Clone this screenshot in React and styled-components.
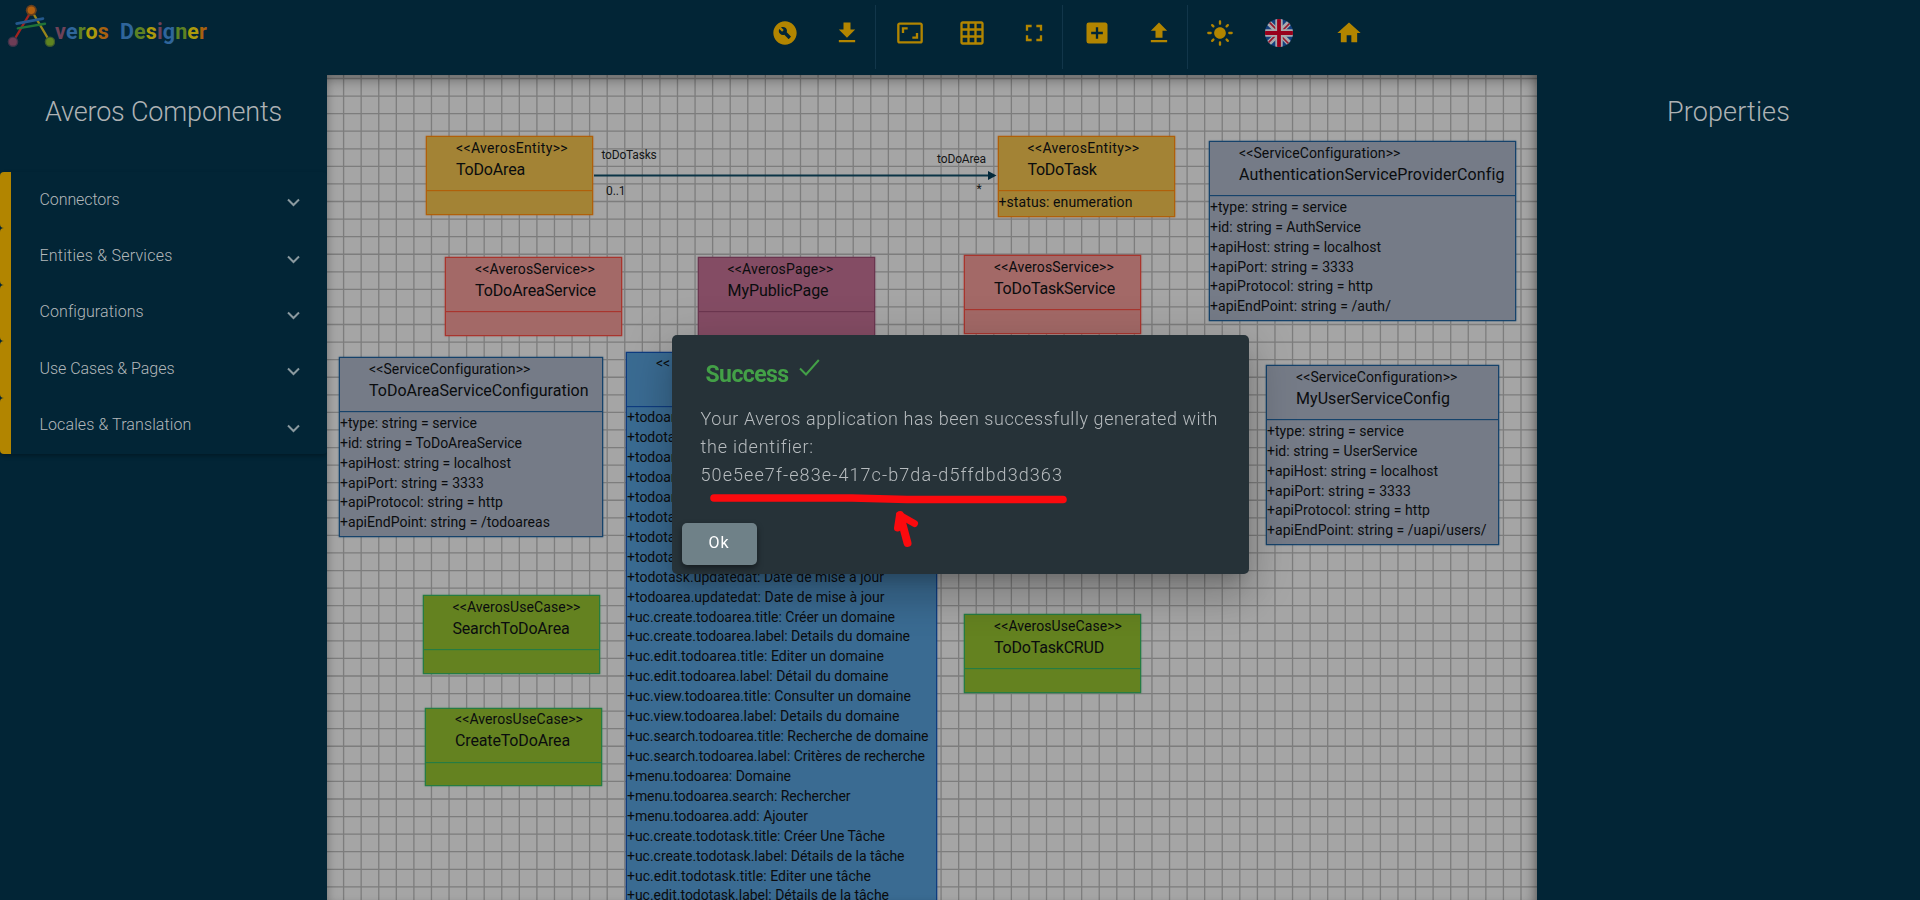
import {useLayoutEffect, useRef, useState} from 'react'
import styled, {createGlobalStyle} from 'styled-components'
import {
  MdAddBox,
  MdAspectRatio,
  MdBuildCircle,
  MdFileUpload,
  MdFullscreen,
  MdGetApp,
  MdGridOn,
  MdHome,
  MdLightMode,
} from 'react-icons/md'

const GlobalStyle = createGlobalStyle`
  * {
    box-sizing: border-box;
  }
  body {
    margin: 0;
    overflow: hidden;
    background-color: #022536;
    font-family: Roboto, 'Open Sans', sans-serif;
  }
`

const Page = styled.div`
  display: flex;
  flex-direction: column;
  height: 900px;
  width: 1920px;
  overflow: hidden;
`

const Header = styled.header`
  display: flex;
  height: 75px;
  flex-shrink: 0;
`

const Brand = styled.div`
  display: flex;
  width: 760px;
`

const LogoMark = styled.svg`
  width: 55px;
  height: 60px;
  flex-shrink: 0;
`

const BrandName = styled.div`
  display: flex;
  padding-top: 19px;
  font-size: 21.5px;
  line-height: 25px;
  font-weight: 700;
`

const BrandWord = styled.span`
  margin-right: 11px;
  white-space: nowrap;
`

const Letter = styled.span`
  color: ${props => props.$color};
`

const ToolGroup = styled.div`
  display: flex;
  align-items: center;
  height: 64px;
  margin-top: 5px;
  padding: 0 4px 8px ${props => props.$left}px;
  gap: ${props => props.$gap || 14.3}px;
  border-right: ${props => (props.$last ? 'none' : '1px solid #12364a')};
`

const ToolButton = styled.button`
  display: flex;
  align-items: center;
  justify-content: center;
  width: 48px;
  height: 48px;
  padding: 0;
  border: none;
  background: none;
  color: #b28500;
  font-size: 28px;
  margin-left: ${props => props.$shift || 0}px;
`

const Body = styled.div`
  display: flex;
  flex: 1;
  min-height: 0;
`

const SidePanel = styled.aside`
  width: ${props => props.$width}px;
  flex-shrink: 0;
`

const PanelTitle = styled.h1`
  display: flex;
  justify-content: center;
  margin: 0;
  height: 97px;
  padding-top: 20px;
  font-size: 27px;
  line-height: 34px;
  font-weight: 300;
  color: #aeb2b4;
`

const Menu = styled.div`
  box-shadow: 0 2px 4px rgba(0, 0, 0, 0.3);
  border-radius: 4px;
`

const MenuItem = styled.div`
  display: flex;
  align-items: center;
  justify-content: space-between;
  height: 56.4px;
  padding: 0 27px 2px 28.5px;
  border-left: 11px solid #b28500;
  border-radius: 4px;
  font-size: 16px;
  font-weight: 300;
  color: #b3b8ba;
`

const Chevron = styled.svg`
  width: 13px;
  height: 9px;
  margin-top: 7px;
`

const Canvas = styled.main`
  position: relative;
  width: 1210px;
  overflow: hidden;
  background-color: #a5a5a5;
`

const Layer = styled.svg`
  position: absolute;
  top: 0;
  left: 0;
  width: 1210px;
  height: 825px;
`

const CanvasShade = styled.div`
  position: absolute;
  inset: 0;
  box-shadow: inset 0 8px 14px -4px rgba(0, 0, 0, 0.4),
    inset -10px 0 14px -10px rgba(0, 0, 0, 0.4),
    inset 6px 0 10px -8px rgba(0, 0, 0, 0.2);
`

const Node = styled.section`
  position: absolute;
  left: ${props => props.$x}px;
  top: ${props => props.$y}px;
  width: ${props => props.$w}px;
  min-height: 78.5px;
  border: 1px solid ${props => props.$line};
  background-color: ${props => props.$fill};
  box-shadow: 0 0 1px 0.3px ${props => props.$line};
  color: #0a0c0e;
  padding-bottom: 4px;
`

const NodeHead = styled.div`
  height: 54px;
  padding: 0.5px 0 0 29px;
  border-bottom: 1px solid ${props => props.$line};
  box-shadow: 0 0 1px ${props => props.$line};
`

const Stereotype = styled.div`
  font-size: 14px;
  line-height: 21px;
`

const NodeName = styled.div`
  font-size: 16px;
  line-height: 22px;
`

const Members = styled.div`
  padding-top: 0.8px;
`

const Member = styled.div`
  height: 19.93px;
  font-size: 14px;
  line-height: 20px;
`

const EdgeLabel = styled.div`
  position: absolute;
  left: ${props => props.$x}px;
  top: ${props => props.$y}px;
  font-size: 12px;
  line-height: 14px;
  color: #141617;
`

const FitSpan = styled.span`
  display: inline-block;
  white-space: pre;
`

const Overlay = styled.div`
  position: fixed;
  inset: 0;
  display: flex;
  align-items: center;
  justify-content: center;
  padding: 9px 0 0 1px;
`

const Dialog = styled.div`
  position: relative;
  display: flex;
  flex-direction: column;
  width: 577px;
  height: 239px;
  border-radius: 5px;
  background-color: #263238;
  box-shadow: 0 11px 15px -7px rgba(0, 0, 0, 0.2),
    0 24px 38px 3px rgba(0, 0, 0, 0.14), 0 9px 46px 8px rgba(0, 0, 0, 0.12);
`

const DialogTitle = styled.h2`
  display: flex;
  align-items: flex-start;
  gap: 10px;
  height: 70px;
  margin: 0;
  padding: 24px 0 0 33.5px;
  font-size: 23px;
  line-height: 32px;
  font-weight: 700;
  color: #43a047;
`

const CheckMark = styled.svg`
  width: 21px;
  height: 17px;
`

const DialogText = styled.p`
  margin: 0;
  padding-left: 28.5px;
  font-size: 18px;
  line-height: 28px;
  font-weight: 300;
  color: #b6bbbe;
`

const OkButton = styled.button`
  width: 75px;
  height: 42px;
  margin: 34px 0 0 10px;
  padding: 0 1px 3px 0;
  border: none;
  border-radius: 5px;
  background-color: #6f8188;
  color: #fff;
  font-family: inherit;
  font-size: 16px;
  letter-spacing: 1px;
  box-shadow: 0 3px 6px rgba(0, 0, 0, 0.45);
`

const Marker = styled.svg`
  position: absolute;
  left: 0;
  top: 0;
  width: 577px;
  height: 239px;
  pointer-events: none;
`

// spreads the letters so that the text takes the given width
const Fit = ({width, children}) => {
  const ref = useRef(null)
  const [spacing, setSpacing] = useState(0)

  useLayoutEffect(() => {
    if (!width) return
    const natural = ref.current.getBoundingClientRect().width
    setSpacing((width - natural) / ref.current.textContent.length)
  }, [width])

  return (
    <FitSpan ref={ref} style={{letterSpacing: `${spacing}px`}}>
      {children}
    </FitSpan>
  )
}

const kinds = {
  entity: {stereotype: 'AverosEntity', w: 112, fill: '#a38335', line: '#b0600a'},
  service: {
    stereotype: 'AverosService',
    w: 120,
    fill: '#a36967',
    line: '#a9352e',
  },
  page: {stereotype: 'AverosPage', w: 106, fill: '#844c64', line: '#6c3650'},
  config: {
    stereotype: 'ServiceConfiguration',
    w: 161,
    fill: '#757b87',
    line: '#16436b',
  },
  locale: {
    stereotype: '',
    fill: '#3a6b92',
    line: '#0e3c80',
  },
  useCase: {
    stereotype: 'AverosUseCase',
    w: 128,
    fill: '#648220',
    line: '#267c43',
  },
}

const nodes = [
  {kind: 'entity', x: 426, y: 136, w: 167, name: ['ToDoArea', 69]},
  {
    kind: 'entity',
    x: 997.5,
    y: 136,
    w: 177,
    name: ['ToDoTask', 69],
    members: [['+status: enumeration', 134]],
  },
  {kind: 'service', x: 445, y: 257, w: 177, name: ['ToDoAreaService', 121]},
  {kind: 'page', x: 697.5, y: 257, w: 177, name: ['MyPublicPage', 101]},
  {kind: 'service', x: 964, y: 255, w: 177, name: ['ToDoTaskService', 121]},
  {
    kind: 'config',
    x: 1209,
    y: 141,
    w: 307,
    name: ['AuthenticationServiceProviderConfig', 265],
    members: [
      ['+type: string = service', 137],
      ['+id: string = AuthService', 151],
      ['+apiHost: string = localhost', 171],
      ['+apiPort: string = 3333', 144],
      ['+apiProtocol: string = http', 163],
      ['+apiEndPoint: string = /auth/', 181],
    ],
  },
  {
    kind: 'config',
    x: 339,
    y: 357,
    w: 264,
    name: ['ToDoAreaServiceConfiguration', 219],
    members: [
      ['+type: string = service', 137],
      ['+id: string = ToDoAreaService', 182],
      ['+apiHost: string = localhost', 171],
      ['+apiPort: string = 3333', 144],
      ['+apiProtocol: string = http', 163],
      ['+apiEndPoint: string = /todoareas', 210],
    ],
  },
  {
    kind: 'config',
    x: 1266,
    y: 365,
    w: 233,
    name: ['MyUserServiceConfig', 153.5],
    members: [
      ['+type: string = service', 137],
      ['+id: string = UserService', 150.5],
      ['+apiHost: string = localhost', 171],
      ['+apiPort: string = 3333', 144],
      ['+apiProtocol: string = http', 163],
      ['+apiEndPoint: string = /uapi/users/', 219.5],
    ],
  },
  {
    kind: 'locale',
    x: 626,
    y: 351.5,
    w: 311,
    name: [''],
    members: [
      ['+todoarea'],
      ['+todotask'],
      ['+todoarea'],
      ['+todoarea'],
      ['+todoarea'],
      ['+todotask'],
      ['+todotask'],
      ['+todotask'],
      ['+todotask.updatedat: Date de mise à jour', 257],
      ['+todoarea.updatedat: Date de mise à jour', 257.5],
      ['+uc.create.todoarea.title: Créer un domaine', 268],
      ['+uc.create.todoarea.label: Details du domaine', 283],
      ['+uc.edit.todoarea.title: Editer un domaine', 257],
      ['+uc.edit.todoarea.label: Détail du domaine', 261.5],
      ['+uc.view.todoarea.title: Consulter un domaine', 284],
      ['+uc.view.todoarea.label: Details du domaine', 272.5],
      ['+uc.search.todoarea.title: Recherche de domaine', 301.5],
      ['+uc.search.todoarea.label: Critères de recherche', 298],
      ['+menu.todoarea: Domaine', 164],
      ['+menu.todoarea.search: Rechercher', 223.5],
      ['+menu.todoarea.add: Ajouter', 181],
      ['+uc.create.todotask.title: Créer Une Tâche', 258],
      ['+uc.create.todotask.label: Détails de la tâche', 277.5],
      ['+uc.edit.todotask.title: Editer une tâche', 244],
      ['+uc.edit.todotask.label: Détails de la tâche', 262],
    ],
  },
  {kind: 'useCase', x: 422.5, y: 595, w: 177, name: ['SearchToDoArea', 117]},
  {kind: 'useCase', x: 425, y: 707.5, w: 177, name: ['CreateToDoArea', 115]},
  {kind: 'useCase', x: 964, y: 614, w: 177, name: ['ToDoTaskCRUD', 110]},
]

const menuItems = [
  ['Connectors', 80],
  ['Entities & Services', 133],
  ['Configurations', 104],
  ['Use Cases & Pages', 135],
  ['Locales & Translation', 152],
]

const plum = '#6e4259'
const blue = '#2f659b'
const green = '#5d8124'
const yellow = '#ac9a0c'
const orange = '#a8610f'

const brandWords = [
  {text: 'veros', width: 54, colors: [plum, blue, green, yellow, orange]},
  {
    text: 'Designer',
    width: 87,
    colors: [blue, green, yellow, plum, blue, green, yellow, orange],
  },
]

// canvas origin inside the window
const originX = 327
const originY = 75
const gridStep = 17.573
const columns = Array.from({length: 69}, (_, i) => 16.6 + i * gridStep)
const rows = Array.from({length: 47}, (_, i) => 3.5 + i * gridStep)

const Logo = () => (
  <LogoMark viewBox="0 0 55 60">
    <g strokeLinecap="round" fill="none">
      <path d="M31.3 11 13.5 41" stroke="#a0231f" strokeWidth="2.4" />
      <path d="M31.8 11 49.5 41" stroke="#98851a" strokeWidth="2.4" />
      <path d="M16.6 23.6 43 18.6" stroke="#24588c" strokeWidth="2.6" />
      <path d="M17.8 28.4 45 23.8" stroke="#207238" strokeWidth="2.4" />
    </g>
    <circle cx="31.3" cy="10.3" r="5.5" fill="#673f1d" />
    <circle cx="31.3" cy="10.3" r="3.7" fill="#b2600f" />
    <circle cx="13" cy="41.7" r="5.3" fill="#3c344a" />
    <circle cx="13" cy="41.7" r="3.9" fill="#6e3d56" />
    <circle cx="50" cy="41.7" r="5.3" fill="#3c5a2c" />
    <circle cx="50" cy="41.7" r="3.9" fill="#5f8420" />
  </LogoMark>
)

const Flag = () => (
  <svg width="28" height="28" viewBox="0 0 28 28">
    <clipPath id="disc">
      <circle cx="14" cy="14" r="14" />
    </clipPath>
    <g clipPath="url(#disc)">
      <rect width="28" height="28" fill="#123f7e" />
      <path d="M2 2 26 26M26 2 2 26" stroke="#a8a8ac" strokeWidth="5.4" />
      <path d="M3 2 14 13M14 15 25 26" stroke="#98152a" strokeWidth="1.6" />
      <path d="M26 3 15 14M13 14 2 25" stroke="#98152a" strokeWidth="1.6" />
      <path d="M14 0V28M0 14H28" stroke="#a8a8ac" strokeWidth="7.4" />
      <path d="M14 0V28M0 14H28" stroke="#98001b" strokeWidth="3.8" />
    </g>
  </svg>
)

const ClassNode = ({node}) => {
  const kind = kinds[node.kind]
  return (
    <Node
      $x={node.x - originX}
      $y={node.y - originY}
      $w={node.w}
      $fill={kind.fill}
      $line={kind.line}
    >
      <NodeHead $line={kind.line}>
        <Stereotype>
          {kind.stereotype ? (
            <Fit width={kind.w}>{`<<${kind.stereotype}>>`}</Fit>
          ) : (
            '<<'
          )}
        </Stereotype>
        <NodeName>
          <Fit width={node.name[1]}>{node.name[0]}</Fit>
        </NodeName>
      </NodeHead>
      <Members>
        {(node.members || []).map(([text, width], i) => (
          <Member key={`${text}${i}`}>
            <Fit width={width}>{text}</Fit>
          </Member>
        ))}
      </Members>
    </Node>
  )
}

const Toolbar = () => (
  <>
    <ToolGroup $left={0.5}>
      <ToolButton>
        <MdBuildCircle />
      </ToolButton>
      <ToolButton>
        <MdGetApp />
      </ToolButton>
    </ToolGroup>
    <ToolGroup $left={10}>
      <ToolButton>
        <MdAspectRatio />
      </ToolButton>
      <ToolButton>
        <MdGridOn />
      </ToolButton>
      <ToolButton>
        <MdFullscreen />
      </ToolButton>
    </ToolGroup>
    <ToolGroup $left={9.5}>
      <ToolButton>
        <MdAddBox />
      </ToolButton>
      <ToolButton>
        <MdFileUpload />
      </ToolButton>
    </ToolGroup>
    <ToolGroup $left={8} $gap={11} $last>
      <ToolButton>
        <MdLightMode />
      </ToolButton>
      <ToolButton>
        <Flag />
      </ToolButton>
      <ToolButton $shift={10.7}>
        <MdHome />
      </ToolButton>
    </ToolGroup>
  </>
)

const Diagram = () => (
  <Canvas>
    <Layer>
      {columns.map(x => (
        <path key={x} d={`M${x} 0V825`} stroke="#7d7d7d" strokeWidth="1.3" />
      ))}
      {rows.map(y => (
        <path key={y} d={`M0 ${y}H1210`} stroke="#7d7d7d" strokeWidth="1.3" />
      ))}
    </Layer>
    {nodes.map(node => (
      <ClassNode key={`${node.kind}${node.name[0]}`} node={node} />
    ))}
    <Layer>
      <path d="M267 100.5H664" stroke="#0b3446" strokeWidth="2" />
      <path d="M661 96 669.5 100.5 661 105Z" fill="#04293b" />
    </Layer>
    <EdgeLabel $x={274.5} $y={73}>
      <Fit width={55}>toDoTasks</Fit>
    </EdgeLabel>
    <EdgeLabel $x={279} $y={109}>
      <Fit width={19.5}>0..1</Fit>
    </EdgeLabel>
    <EdgeLabel $x={610} $y={77}>
      <Fit width={49}>toDoArea</Fit>
    </EdgeLabel>
    <EdgeLabel $x={649.5} $y={107}>
      *
    </EdgeLabel>
    <CanvasShade />
  </Canvas>
)

const SuccessDialog = () => (
  <Overlay>
    <Dialog>
      <DialogTitle>
        <Fit width={83}>Success</Fit>
        <CheckMark viewBox="0 0 21 17">
          <path
            d="M1 9.5 7 15.5 19.8 1"
            fill="none"
            stroke="#43a047"
            strokeWidth="2"
          />
        </CheckMark>
      </DialogTitle>
      <DialogText>
        <Fit width={517.5}>
          Your Averos application has been successfully generated with
        </Fit>
        <br />
        <Fit width={113}>the identifier:</Fit>
        <br />
        <Fit width={362.5}>50e5ee7f-e83e-417c-b7da-d5ffdbd3d363</Fit>
      </DialogText>
      <OkButton type="button">Ok</OkButton>
      <Marker viewBox="0 0 577 239">
        <g
          fill="none"
          stroke="#fb0a0e"
          strokeLinecap="round"
          strokeLinejoin="round"
        >
          <path d="M42 163 L180 163 L235 164.5 L391 164.5" strokeWidth="7.6" />
          <path d="M228 180 235.5 208" strokeWidth="8" />
          <path d="M225.5 193 227.5 180 242.5 188.5" strokeWidth="7" />
        </g>
      </Marker>
    </Dialog>
  </Overlay>
)

const App = () => (
  <>
    <GlobalStyle />
    <Page>
      <Header>
        <Brand>
          <Logo />
          <BrandName>
            {brandWords.map(word => (
              <BrandWord key={word.text}>
                <Fit width={word.width}>
                  {word.text.split('').map((char, i) => (
                    <Letter key={`${char}${i}`} $color={word.colors[i]}>
                      {char}
                    </Letter>
                  ))}
                </Fit>
              </BrandWord>
            ))}
          </BrandName>
        </Brand>
        <Toolbar />
      </Header>
      <Body>
        <SidePanel $width={327}>
          <PanelTitle>
            <Fit width={237}>Averos Components</Fit>
          </PanelTitle>
          <Menu>
            {menuItems.map(([label, width]) => (
              <MenuItem key={label}>
                <Fit width={width}>{label}</Fit>
                <Chevron viewBox="0 0 13 9">
                  <path
                    d="M1 1.5 6.5 7 12 1.5"
                    fill="none"
                    stroke="#8a999f"
                    strokeWidth="2"
                  />
                </Chevron>
              </MenuItem>
            ))}
          </Menu>
        </SidePanel>
        <Diagram />
        <SidePanel $width={383}>
          <PanelTitle>
            <Fit width={123}>Properties</Fit>
          </PanelTitle>
        </SidePanel>
      </Body>
    </Page>
    <SuccessDialog />
  </>
)

export default App
